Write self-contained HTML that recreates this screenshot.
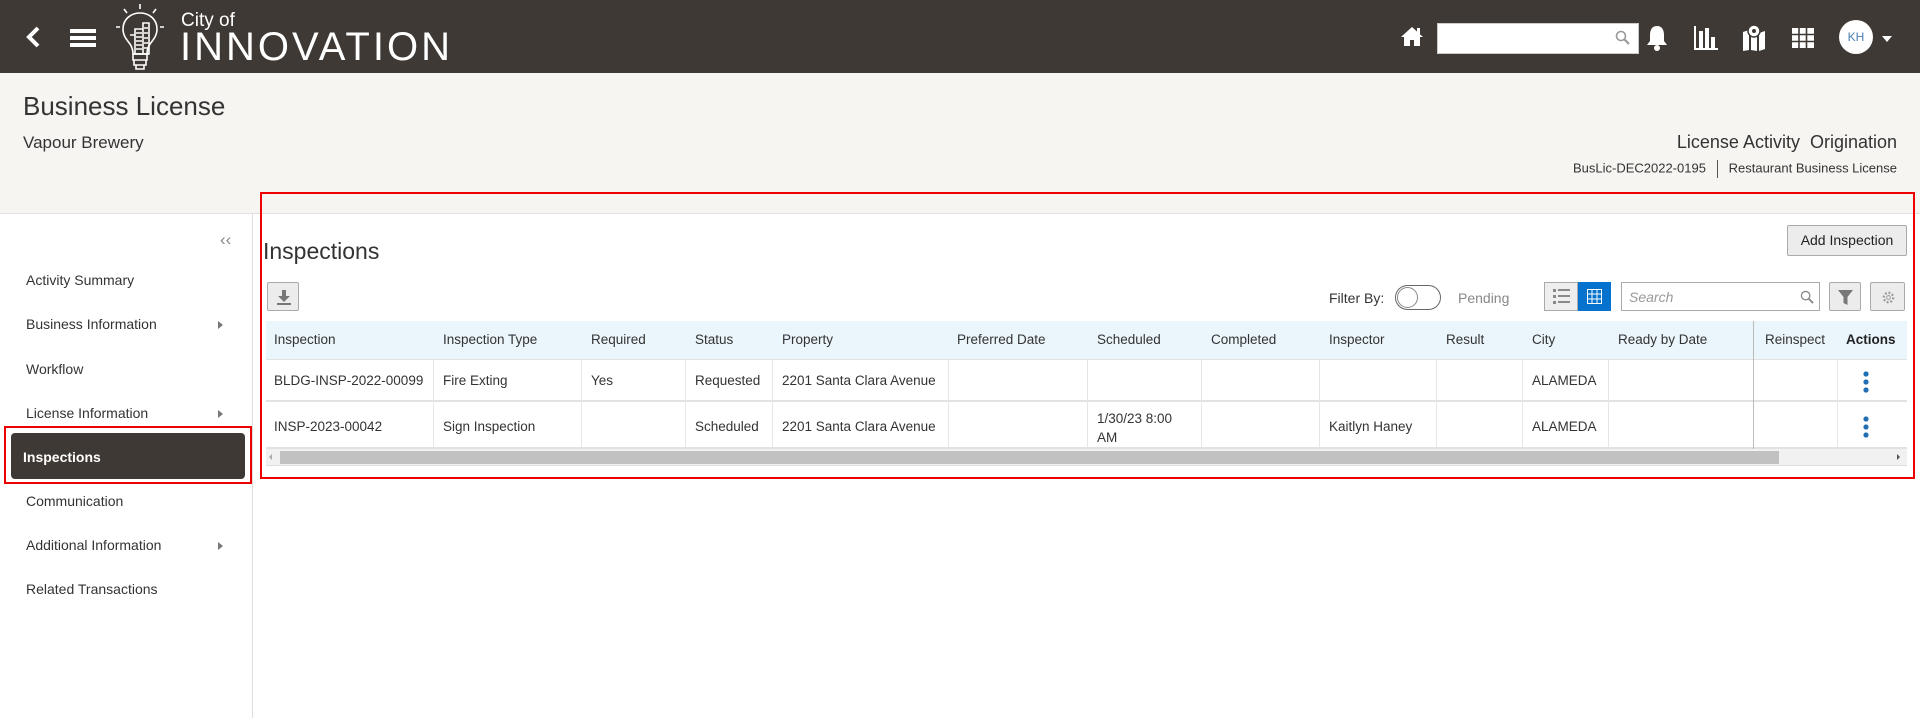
<!DOCTYPE html>
<html><head><meta charset="utf-8">
<style>
*{margin:0;padding:0;box-sizing:border-box}
body{width:1920px;height:718px;overflow:hidden;background:#fff;font-family:"Liberation Sans",sans-serif;color:#333;position:relative}
.a{position:absolute}
#hdr{left:0;top:0;width:1920px;height:73px;background:#3f3935}
#ban{left:0;top:73px;width:1920px;height:141px;background:#f6f5f2;border-bottom:1px solid #e2e0dd}
#side{left:0;top:214px;width:253px;height:504px;border-right:1px solid #ddd;background:#fff}
.si{position:absolute;left:26px;font-size:14px;color:#333}
.arr{position:absolute;left:218px;width:0;height:0;border-top:4px solid transparent;border-bottom:4px solid transparent;border-left:5px solid #777}
.btn{position:absolute;border:1px solid #aaa;background:#ececec;border-radius:2px}
.th{position:absolute;top:332px;font-size:13.5px;color:#333}
.td{position:absolute;font-size:13.5px;color:#333}
.vl{position:absolute;width:1px;background:#e6e6e6}
</style></head><body>
<div id="hdr" class="a">
 <svg class="a" style="left:24px;top:26px" width="18" height="22" viewBox="0 0 18 22"><path d="M14 2 L5 11 L14 20" stroke="#fff" stroke-width="4" fill="none"/></svg>
 <div class="a" style="left:70px;top:29px;width:26px;height:4px;background:#fff"></div>
 <div class="a" style="left:70px;top:36px;width:26px;height:4px;background:#fff"></div>
 <div class="a" style="left:70px;top:43px;width:26px;height:4px;background:#fff"></div>
 <svg class="a" style="left:114px;top:3px" width="52" height="68" viewBox="0 0 52 68" stroke="#fff" fill="none" stroke-width="1.6">
  <path d="M26 1v5M10 6l3 4M42 6l-3 4M2 24h4M46 24h4"/>
  <path d="M26 10c-10 0-17 7-17 16 0 7 4 11 7 15 2 3 3 6 3 10h14c0-4 1-7 3-10 3-4 7-8 7-15 0-9-7-16-17-16z"/>
  <path d="M19 51h14v6H19zM20 57h12v5H20zM22 62h8v4h-8z"/>
  <path d="M21 26h8v25h-8zM29 20h6v31h-6zM16 32h5v15"/>
  <path d="M22 30h6M22 34h6M22 38h6M22 42h6M22 46h6M30 25h4M30 30h4M30 35h4M30 40h4M30 45h4"/>
 </svg>
 <div class="a" style="left:181px;top:10px;color:#fff;font-size:19px">City of</div>
 <div class="a" style="left:180px;top:27px;color:#fff;font-size:40px;letter-spacing:3px;line-height:40px">INNOVATION</div>
 <svg class="a" style="left:1400px;top:25px" width="24" height="22" viewBox="0 0 24 22"><path d="M12 2 L1 12 H4 V21 H10 V15 H14 V21 H20 V12 H23 Z" fill="#fff"/><rect x="17" y="3" width="3" height="6" fill="#fff"/></svg>
 <div class="a" style="left:1437px;top:23px;width:202px;height:31px;background:#fff;border:1px solid #ccc"></div>
 <svg class="a" style="left:1615px;top:30px" width="16" height="16" viewBox="0 0 16 16"><circle cx="6" cy="6" r="4.5" stroke="#999" stroke-width="1.6" fill="none"/><path d="M9.5 9.5 L14 14" stroke="#999" stroke-width="2.2"/></svg>
 <svg class="a" style="left:1646px;top:24px" width="22" height="28" viewBox="0 0 22 28"><path d="M11 2c-5 0-7 4-7 9v6l-3 4h20l-3-4v-6c0-5-2-9-7-9z" fill="#fff"/><circle cx="11" cy="24" r="3" fill="#fff"/></svg>
 <svg class="a" style="left:1693px;top:25px" width="26" height="26" viewBox="0 0 26 26" fill="#fff"><rect x="1" y="1" width="2" height="24"/><rect x="1" y="23" width="24" height="2"/><rect x="6" y="6" width="4" height="17"/><rect x="12" y="3" width="4" height="20"/><rect x="18" y="12" width="4" height="11"/></svg>
 <svg class="a" style="left:1742px;top:24px" width="24" height="28" viewBox="0 0 24 28" fill="#fff"><path d="M1 8 L7 6 L7 26 L1 27Z M9 6 L15 9 L15 27 L9 26Z M17 9 L23 7 L23 25 L17 27Z"/><circle cx="12" cy="7" r="6" fill="#fff" stroke="#3f3935" stroke-width="1.5"/><circle cx="12" cy="7" r="2" fill="#3f3935"/></svg>
 <svg class="a" style="left:1792px;top:28px" width="22" height="20" viewBox="0 0 22 20" fill="#fff"><rect x="0" y="0" width="22" height="20"/><path d="M0 6.5h22M0 13.5h22M7 0v20M14.5 0v20" stroke="#3f3935" stroke-width="1.6"/></svg>
 <div class="a" style="left:1839px;top:20px;width:34px;height:34px;border-radius:50%;background:#fff;color:#4a7fb0;font-size:12px;text-align:center;line-height:34px">KH</div>
 <div class="a" style="left:1882px;top:36px;width:0;height:0;border-left:5px solid transparent;border-right:5px solid transparent;border-top:6px solid #fff"></div>
</div>
<div id="ban" class="a">
 <div class="a" style="left:23px;top:18px;font-size:26px;color:#333">Business License</div>
 <div class="a" style="left:23px;top:60px;font-size:17px;color:#333">Vapour Brewery</div>
 <div class="a" style="right:23px;top:59px;font-size:18px;color:#333;white-space:nowrap">License Activity&nbsp; Origination</div>
 <div class="a" style="right:23px;top:87px;font-size:13px;color:#333;white-space:nowrap">BusLic-DEC2022-0195 &nbsp;&nbsp;<span style="display:inline-block;width:1px;height:18px;background:#555;vertical-align:middle"></span>&nbsp;&nbsp; Restaurant Business License</div>
</div>
<div id="side" class="a">
 <div class="a" style="left:220px;top:16px;font-size:17px;color:#888">&#8249;&#8249;</div>
 <div class="si" style="top:58px">Activity Summary</div>
 <div class="si" style="top:102px">Business Information</div><div class="arr" style="top:107px"></div>
 <div class="si" style="top:147px">Workflow</div>
 <div class="si" style="top:191px">License Information</div><div class="arr" style="top:196px"></div>
 <div class="a" style="left:11px;top:219px;width:234px;height:46px;background:#3f3935;border-radius:4px"></div>
 <div class="si" style="top:235px;left:23px;color:#fff;font-weight:bold">Inspections</div>
 <div class="a" style="left:4px;top:212px;width:248px;height:58px;border:2px solid #e00"></div>
 <div class="si" style="top:279px">Communication</div>
 <div class="si" style="top:323px">Additional Information</div><div class="arr" style="top:328px"></div>
 <div class="si" style="top:367px">Related Transactions</div>
</div>
<!-- main -->
<div class="a" style="left:260px;top:192px;width:1655px;height:287px;border:2px solid #e00"></div>
<div class="a" style="left:263px;top:238px;font-size:23px;color:#333">Inspections</div>
<div class="btn" style="left:1787px;top:225px;width:120px;height:31px;font-size:14px;text-align:center;line-height:29px;color:#222">Add Inspection</div>
<div class="btn" style="left:267px;top:282px;width:32px;height:29px"><svg class="a" style="left:8px;top:6px" width="16" height="16" viewBox="0 0 16 16" fill="#777"><rect x="6" y="1" width="4" height="6"/><path d="M2 7h12l-6 6z"/><rect x="1" y="14" width="14" height="2"/></svg></div>
<div class="a" style="left:1329px;top:290px;font-size:14px;color:#333">Filter By:</div>
<div class="a" style="left:1395px;top:285px;width:46px;height:25px;border:1px solid #666;border-radius:13px;background:#fff"><div class="a" style="left:1px;top:1px;width:21px;height:21px;border-radius:50%;border:1px solid #888;background:#fff"></div></div>
<div class="a" style="left:1458px;top:290px;font-size:14px;color:#888">Pending</div>
<div class="a" style="left:1544px;top:282px;width:34px;height:29px;background:#eee;border:1px solid #aaa"><svg class="a" style="left:8px;top:6px" width="17" height="15" viewBox="0 0 17 15" fill="#888"><rect x="0" y="0" width="3" height="3"/><rect x="5" y="0" width="12" height="2"/><rect x="0" y="6" width="3" height="3"/><rect x="5" y="6" width="12" height="2"/><rect x="0" y="12" width="3" height="3"/><rect x="5" y="12" width="12" height="2"/></svg></div>
<div class="a" style="left:1578px;top:282px;width:33px;height:29px;background:#0572ce"><svg class="a" style="left:9px;top:7px" width="15" height="15" viewBox="0 0 15 15"><rect x="0.5" y="0.5" width="14" height="14" fill="none" stroke="#fff"/><path d="M0 5h15M0 10h15M5 0v15M10 0v15" stroke="#fff"/></svg></div>
<div class="a" style="left:1621px;top:282px;width:199px;height:29px;border:1px solid #aaa;background:#fff;font-size:14px;font-style:italic;color:#999;padding:6px 0 0 7px">Search<svg class="a" style="left:178px;top:7px" width="15" height="15" viewBox="0 0 16 16"><circle cx="6" cy="6" r="4.5" stroke="#888" stroke-width="1.4" fill="none"/><path d="M9.5 9.5 L14 14" stroke="#888" stroke-width="2"/></svg></div>
<div class="btn" style="left:1829px;top:282px;width:32px;height:29px"><svg class="a" style="left:8px;top:7px" width="15" height="15" viewBox="0 0 15 15"><path d="M0 0h15l-5.5 7v8l-4-2V7z" fill="#777"/></svg></div>
<div class="btn" style="left:1870px;top:282px;width:35px;height:29px"><svg class="a" style="left:10px;top:7px" width="15" height="15" viewBox="0 0 16 16"><circle cx="8" cy="8" r="5" stroke="#999" stroke-width="2.5" stroke-dasharray="2 1.9" fill="none"/><circle cx="8" cy="8" r="2" stroke="#999" fill="none"/></svg></div>
<!-- table -->
<div class="a" style="left:266px;top:321px;width:1641px;height:38px;background:#eaf5fc"></div>
<div class="a" style="left:266px;top:359px;width:1641px;height:1px;background:#e2e2e2"></div>
<div class="a" style="left:266px;top:400px;width:1641px;height:2px;background:#e2e2e2"></div>
<div class="a" style="left:266px;top:447px;width:1641px;height:2px;background:#e2e2e2"></div>
<div class="vl" style="left:433px;top:359px;height:88px"></div>
<div class="vl" style="left:581px;top:359px;height:88px"></div>
<div class="vl" style="left:685px;top:359px;height:88px"></div>
<div class="vl" style="left:772px;top:359px;height:88px"></div>
<div class="vl" style="left:948px;top:359px;height:88px"></div>
<div class="vl" style="left:1087px;top:359px;height:88px"></div>
<div class="vl" style="left:1201px;top:359px;height:88px"></div>
<div class="vl" style="left:1319px;top:359px;height:88px"></div>
<div class="vl" style="left:1436px;top:359px;height:88px"></div>
<div class="vl" style="left:1522px;top:359px;height:88px"></div>
<div class="vl" style="left:1608px;top:359px;height:88px"></div>
<div class="a" style="left:1753px;top:321px;width:1px;height:128px;background:#bbb"></div>
<div class="vl" style="left:1837px;top:359px;height:88px"></div>
<div class="th" style="left:274px">Inspection</div>
<div class="th" style="left:443px">Inspection Type</div>
<div class="th" style="left:591px">Required</div>
<div class="th" style="left:695px">Status</div>
<div class="th" style="left:782px">Property</div>
<div class="th" style="left:957px">Preferred Date</div>
<div class="th" style="left:1097px">Scheduled</div>
<div class="th" style="left:1211px">Completed</div>
<div class="th" style="left:1329px">Inspector</div>
<div class="th" style="left:1446px">Result</div>
<div class="th" style="left:1532px">City</div>
<div class="th" style="left:1618px">Ready by Date</div>
<div class="th" style="left:1765px">Reinspect</div>
<div class="th" style="left:1846px;font-weight:bold;color:#222">Actions</div>
<div class="td" style="left:274px;top:373px">BLDG-INSP-2022-00099</div>
<div class="td" style="left:443px;top:373px">Fire Exting</div>
<div class="td" style="left:591px;top:373px">Yes</div>
<div class="td" style="left:695px;top:373px">Requested</div>
<div class="td" style="left:782px;top:373px">2201 Santa Clara Avenue</div>
<div class="td" style="left:1532px;top:373px">ALAMEDA</div>
<div class="td" style="left:274px;top:419px">INSP-2023-00042</div>
<div class="td" style="left:443px;top:419px">Sign Inspection</div>
<div class="td" style="left:695px;top:419px">Scheduled</div>
<div class="td" style="left:782px;top:419px">2201 Santa Clara Avenue</div>
<div class="td" style="left:1097px;top:409px;line-height:19px">1/30/23 8:00<br>AM</div>
<div class="td" style="left:1329px;top:419px">Kaitlyn Haney</div>
<div class="td" style="left:1532px;top:419px">ALAMEDA</div>
<svg class="a" style="left:1862px;top:371px" width="8" height="22" viewBox="0 0 8 22" fill="#1f6fb2"><circle cx="4" cy="3" r="2.6"/><circle cx="4" cy="11" r="2.6"/><circle cx="4" cy="19" r="2.6"/></svg>
<svg class="a" style="left:1862px;top:416px" width="8" height="22" viewBox="0 0 8 22" fill="#1f6fb2"><circle cx="4" cy="3" r="2.6"/><circle cx="4" cy="11" r="2.6"/><circle cx="4" cy="19" r="2.6"/></svg>
<!-- scrollbar -->
<div class="a" style="left:266px;top:449px;width:1641px;height:17px;background:#f1f1f1;border-bottom:1px solid #ddd"></div>
<div class="a" style="left:280px;top:451px;width:1499px;height:13px;background:#c1c1c1"></div>
<div class="a" style="left:269px;top:454px;width:0;height:0;border-top:3px solid transparent;border-bottom:3px solid transparent;border-right:3px solid #aaa"></div>
<div class="a" style="left:1897px;top:454px;width:0;height:0;border-top:3px solid transparent;border-bottom:3px solid transparent;border-left:3px solid #555"></div>
</body></html>
